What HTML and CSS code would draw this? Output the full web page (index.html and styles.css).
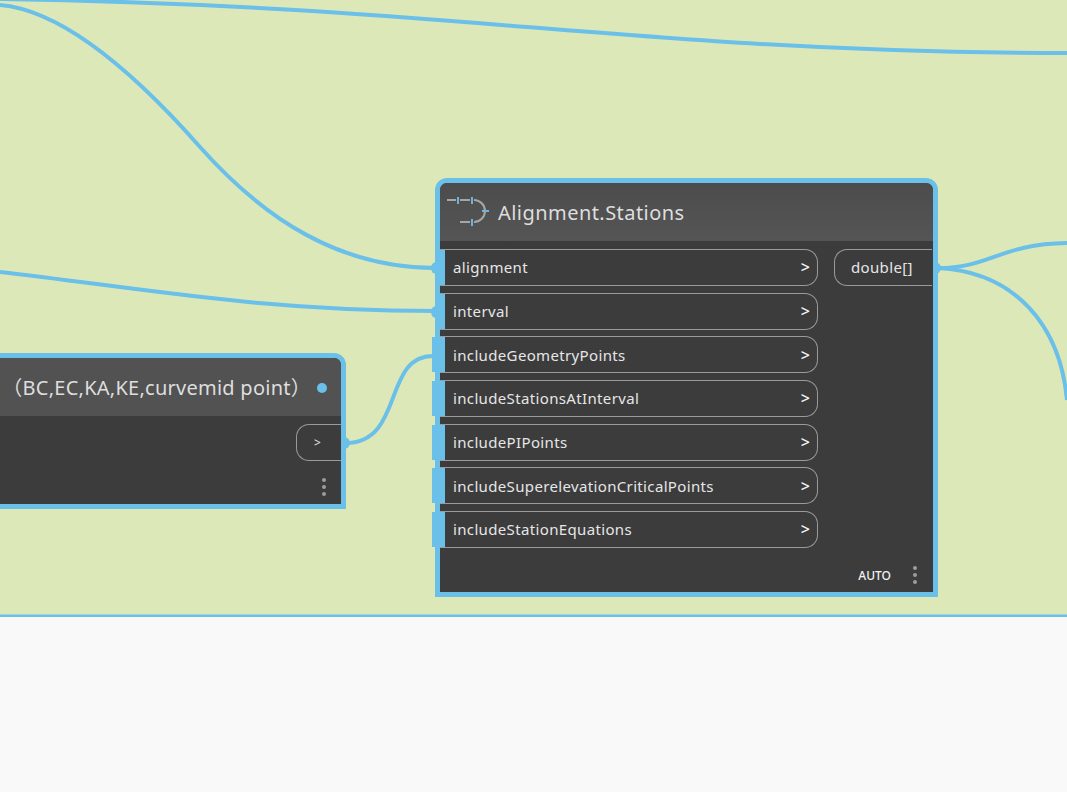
FILE: index.html
```
<!DOCTYPE html>
<html lang="en">
<head>
<meta charset="utf-8">
<title>Alignment.Stations</title>
<link rel="stylesheet" href="styles.css">
</head>
<body>
<main class="canvas">
  <svg class="wires" width="1067" height="615" viewBox="0 0 1067 615" fill="none">
    <path d="M0 -1C330 4 520 30 760 44C880 51 980 53 1067 53"/>
    <path d="M0 5C60 10 132 70 200 147C265 220 340 268 436 268"/>
    <path d="M0 272C140 288 260 311 436 311"/>
    <path d="M345 443C405 443 382 356 433 356"/>
    <path d="M938 268C990 268 1000 244 1067 243"/>
    <path d="M938 268C1015 272 1060 325 1067 400"/>
  </svg>

  <section class="node node-left">
    <header class="head head-left">
      <span class="title-left">（BC,EC,KA,KE,curvemid point）</span>
      <span class="status-dot"></span>
    </header>
    <div class="left-body">
      <div class="out-pill small"><span>&gt;</span></div>
      <div class="dots"><i></i><i></i><i></i></div>
    </div>
  </section>

  <section class="node node-main">
    <header class="head head-main">
      <svg class="node-icon" width="44" height="32" viewBox="0 0 44 32" fill="none">
        <path class="ic-grey" d="M1 6H10M14 6H24M28 6C34 6 39 11 39 17C39 23 34 28 28 28M14 28H24"/>
        <path class="ic-blue" d="M12 3V10M26 3V10M26 25V32M36 17H43"/>
      </svg>
      <h1>Alignment.Stations</h1>
    </header>
    <div class="main-body">
      <div class="inputs">
        <div class="in-pill"><b class="port linked"></b><span>alignment</span><em>&gt;</em></div>
        <div class="in-pill"><b class="port linked"></b><span>interval</span><em>&gt;</em></div>
        <div class="in-pill"><b class="port"></b><span>includeGeometryPoints</span><em>&gt;</em></div>
        <div class="in-pill"><b class="port"></b><span>includeStationsAtInterval</span><em>&gt;</em></div>
        <div class="in-pill"><b class="port"></b><span>includePIPoints</span><em>&gt;</em></div>
        <div class="in-pill"><b class="port"></b><span>includeSuperelevationCriticalPoints</span><em>&gt;</em></div>
        <div class="in-pill"><b class="port"></b><span>includeStationEquations</span><em>&gt;</em></div>
      </div>
      <div class="out-pill wide"><span>double[]</span></div>
    </div>
    <footer class="foot">
      <span class="auto">AUTO</span>
      <div class="dots"><i></i><i></i><i></i></div>
    </footer>
  </section>
</main>
<div class="below"></div>
</body>
</html>
```
FILE: styles.css
```
* { box-sizing: border-box; }
html, body { margin: 0; height: 100%; }
body {
  display: flex;
  flex-direction: column;
  overflow: hidden;
  background: #f9f9f9;
  font-family: "Noto Sans", "Noto Sans CJK SC", sans-serif;
  color: #e6e6e6;
}
.canvas {
  position: relative;
  height: 617px;
  flex: none;
  overflow: hidden;
  background: #dde8b9;
  border-bottom: 2px solid #6ac0e8;
  box-shadow: inset 0 -1px 0 #a5d2d6;
}
.below { flex: 1; background: #f9f9f9; }
.wires { position: absolute; left: 0; top: 0; }
.wires path { stroke: #6ac0e8; stroke-width: 4; }

.node {
  position: absolute;
  display: flex;
  flex-direction: column;
  border: 5px solid #6ac0e8;
  background: #3c3c3c;
}
.node-main {
  left: 435px;
  top: 178px;
  width: 503px;
  height: 419px;
  border-radius: 12px 12px 0 0;
}
.node-left {
  left: -20px;
  top: 353px;
  width: 366px;
  height: 156px;
  border-radius: 0 12px 0 0;
}
.head {
  flex: none;
  height: 58px;
  display: flex;
  align-items: center;
  background: #525252;
  border-radius: 7px 7px 0 0;
}
.head-main {
  background: linear-gradient(#4c4c4c, #555);
  padding-left: 6px;
  gap: 8px;
}
.head-main h1 {
  margin: 0;
  font-size: 20px;
  font-weight: 400;
  letter-spacing: 0.45px;
  color: #dedede;
}
.node-icon { flex: none; margin-top: -4px; }
.ic-grey { stroke: #a6a6a6; stroke-width: 2; }
.ic-blue { stroke: #6fb2dc; stroke-width: 2; }

.head-left {
  justify-content: flex-end;
  padding-right: 14px;
  gap: 6px;
  border-radius: 0 7px 0 0;
}
.title-left {
  font-size: 20px;
  letter-spacing: 0.25px;
  margin-top: -2px;
  color: #dedede;
}
.status-dot {
  width: 10px;
  height: 10px;
  margin-top: 1px;
  border-radius: 50%;
  background: #6ac0e8;
}

.main-body {
  flex: 1;
  display: flex;
  gap: 16px;
  padding-top: 7.9px;
}
.inputs {
  display: flex;
  flex-direction: column;
  gap: 6.67px;
  width: 378px;
  flex: none;
}
.in-pill {
  position: relative;
  height: 37px;
  display: flex;
  align-items: center;
  justify-content: space-between;
  padding: 0 7px 0 13px;
  border: 1px solid #9a9a9a;
  border-left: 0;
  border-radius: 0 13px 13px 0;
  font-size: 15px;
  letter-spacing: 0.35px;
}
.in-pill em {
  font-style: normal;
  font-size: 16px;
  font-weight: 500;
  letter-spacing: 0;
  color: #f4f4f4;
}
.port {
  position: absolute;
  left: -8px;
  top: 0;
  bottom: 0;
  width: 13px;
  background: #6ac0e8;
}
.port.linked { left: 0; width: 5px; }
.port.linked::before {
  content: "";
  position: absolute;
  left: -9px;
  top: 12px;
  width: 10px;
  height: 12px;
  border-radius: 50%;
  background: #6ac0e8;
}
.out-pill {
  position: relative;
  height: 37px;
  display: flex;
  align-items: center;
  border: 1px solid #9a9a9a;
  border-right: 0;
  border-radius: 13px 0 0 13px;
  font-size: 15px;
  letter-spacing: 0.35px;
}
.out-pill::after {
  content: "";
  position: absolute;
  right: -9px;
  top: 12px;
  width: 8px;
  height: 12px;
  border-radius: 0 6px 6px 0;
  background: #6ac0e8;
}
.out-pill.wide {
  flex: 1;
  margin-right: 1px;
  padding-left: 16px;
}
.out-pill.small {
  width: 45px;
  justify-content: center;
  font-size: 12px;
  padding-right: 3px;
}
.left-body {
  flex: 1;
  display: flex;
  flex-direction: column;
  align-items: flex-end;
  padding-top: 8px;
}
.left-body .dots { margin: 17px 15px 0 0; }

.foot {
  flex: none;
  height: 34px;
  display: flex;
  align-items: center;
  justify-content: flex-end;
  gap: 22px;
  padding: 0 16px 0 0;
}
.auto { font-size: 12px; color: #f2f2f2; font-weight: 500; }
.dots { display: flex; flex-direction: column; gap: 3px; }
.dots i {
  display: block;
  width: 4px;
  height: 4px;
  border-radius: 50%;
  background: #9c9c9c;
}
```
